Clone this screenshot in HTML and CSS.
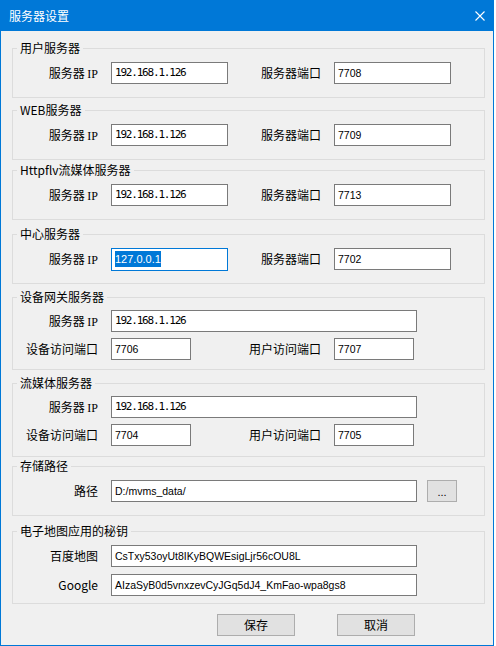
FILE: index.html
```html
<!DOCTYPE html>
<html lang="zh-CN">
<head>
<meta charset="utf-8">
<title>服务器设置</title>
<link rel="stylesheet" href="styles.css">
</head>
<body>
<div class="window">
  <div class="titlebar">
    <span class="title">服务器设置</span>
    <svg class="close" width="10" height="10" viewBox="0 0 10 10" aria-label="关闭">
      <path d="M0.5 0.5L9.5 9.5M9.5 0.5L0.5 9.5" stroke="#fff" stroke-width="1.1" fill="none"/>
    </svg>
  </div>

  <div class="content">
    <section class="group">
      <span class="legend">用户服务器</span>
      <div class="row">
        <span class="lbl">服务器 <span class="latin">IP</span></span>
        <span class="field w-md mono">192.168.1.126</span>
        <span class="lbl lbl-md">服务器端口</span>
        <span class="field w-md">7708</span>
      </div>
    </section>

    <section class="group gap-m">
      <span class="legend">WEB服务器</span>
      <div class="row">
        <span class="lbl">服务器 <span class="latin">IP</span></span>
        <span class="field w-md mono">192.168.1.126</span>
        <span class="lbl lbl-md">服务器端口</span>
        <span class="field w-md">7709</span>
      </div>
    </section>

    <section class="group gap-s">
      <span class="legend">Httpflv流媒体服务器</span>
      <div class="row">
        <span class="lbl">服务器 <span class="latin">IP</span></span>
        <span class="field w-md mono">192.168.1.126</span>
        <span class="lbl lbl-md">服务器端口</span>
        <span class="field w-md">7713</span>
      </div>
    </section>

    <section class="group gap-l">
      <span class="legend">中心服务器</span>
      <div class="row">
        <span class="lbl">服务器 <span class="latin">IP</span></span>
        <span class="field w-md focus"><span class="sel">127.0.0.1</span></span>
        <span class="lbl lbl-md">服务器端口</span>
        <span class="field w-md">7702</span>
      </div>
    </section>

    <section class="group two gap-ml">
      <span class="legend">设备网关服务器</span>
      <div class="row">
        <span class="lbl">服务器 <span class="latin">IP</span></span>
        <span class="field w-lg mono">192.168.1.126</span>
      </div>
      <div class="row">
        <span class="lbl">设备访问端口</span>
        <span class="field w-sm">7706</span>
        <span class="lbl lbl-lg">用户访问端口</span>
        <span class="field w-sm">7707</span>
      </div>
    </section>

    <section class="group two tall gap-ml">
      <span class="legend">流媒体服务器</span>
      <div class="row">
        <span class="lbl">服务器 <span class="latin">IP</span></span>
        <span class="field w-lg mono">192.168.1.126</span>
      </div>
      <div class="row">
        <span class="lbl">设备访问端口</span>
        <span class="field w-sm">7704</span>
        <span class="lbl lbl-lg">用户访问端口</span>
        <span class="field w-sm">7705</span>
      </div>
    </section>

    <section class="group gap-xs">
      <span class="legend">存储路径</span>
      <div class="row">
        <span class="lbl">路径</span>
        <span class="field w-lg">D:/mvms_data/</span>
        <span class="browse">...</span>
      </div>
    </section>

    <section class="group two keys gap-xl">
      <span class="legend">电子地图应用的秘钥</span>
      <div class="row">
        <span class="lbl">百度地图</span>
        <span class="field w-lg">CsTxy53oyUt8IKyBQWEsigLjr56cOU8L</span>
      </div>
      <div class="row">
        <span class="lbl">Google</span>
        <span class="field w-lg">AIzaSyB0d5vnxzevCyJGq5dJ4_KmFao-wpa8gs8</span>
      </div>
    </section>

    <div class="actions">
      <span class="btn">保存</span>
      <span class="btn">取消</span>
    </div>
  </div>
</div>
</body>
</html>
```

FILE: styles.css
```css
* {
  box-sizing: border-box;
}

html,
body {
  margin: 0;
}

body {
  background: #ffffff;
  color: #000000;
  font-family: "Noto Sans CJK SC", sans-serif;
  font-size: 12px;
}

/* dialog frame */
.window {
  width: 494px;
  height: 646px;
  border: 1px solid #0078d7;
  border-top: 0;
  background: #f0f0f0;
  display: flex;
  flex-direction: column;
}

.titlebar {
  height: 31px;
  flex: none;
  background: #0078d7;
  color: #ffffff;
  display: flex;
  align-items: center;
  justify-content: space-between;
  padding: 0 8px 0 8px;
}

.title {
  font-size: 12px;
  line-height: 14px;
}

.close {
  display: block;
}

.content {
  padding: 17px 8px 0 11px;
}

/* group boxes */
.group {
  position: relative;
  border: 1px solid #dcdcdc;
  padding: 13px 0 13px 0;
}

.group.two {
  padding: 12px 0 9px 0;
}

.group.two.tall {
  padding-bottom: 10px;
}

.group.two.keys {
  padding: 13px 0 7px 0;
}

.group.keys .row + .row {
  margin-top: 7px;
}

.gap-xs { margin-top: 9px; }
.gap-s  { margin-top: 10px; }
.gap-m  { margin-top: 12px; }
.gap-ml { margin-top: 13px; }
.gap-l  { margin-top: 14px; }
.gap-xl { margin-top: 15px; }

.legend {
  position: absolute;
  top: -9px;
  left: 4px;
  padding: 0 3px;
  background: #f0f0f0;
  line-height: 16px;
  white-space: nowrap;
}

/* form rows */
.row {
  display: flex;
  align-items: center;
  height: 22px;
}

.row + .row {
  margin-top: 6px;
}

.lbl {
  flex: none;
  width: 85px;
  margin-right: 13px;
  text-align: right;
  white-space: nowrap;
  line-height: 16px;
}

.lbl-md { width: 93px; }
.lbl-lg { width: 130px; }

.latin {
  font-family: "Liberation Serif", serif;
  font-size: 12px;
}

.field {
  flex: none;
  height: 22px;
  border: 1px solid #7a7a7a;
  background: #ffffff;
  padding: 0 3px 1px 3px;
  display: flex;
  align-items: center;
  font-family: "Liberation Sans", sans-serif;
  font-size: 10.5px;
  white-space: nowrap;
  overflow: hidden;
}

.w-sm { width: 80px; }
.w-md { width: 117px; }
.w-lg { width: 306px; }

.field.mono {
  font-family: "DejaVu Sans Mono", monospace;
  font-size: 11px;
  letter-spacing: -1.2px;
}

.field.focus {
  border-color: #0078d7;
  height: 23px;
  padding-bottom: 0;
}

.sel {
  background: #0078d7;
  color: #ffffff;
  line-height: 16px;
  font-size: 11px;
}

/* buttons */
.browse,
.btn {
  flex: none;
  height: 22px;
  border: 1px solid #adadad;
  background: #e1e1e1;
  display: flex;
  align-items: center;
  justify-content: center;
}

.browse {
  width: 30px;
  margin-left: 10px;
  font-family: "Liberation Sans", sans-serif;
  font-size: 11px;
  padding-top: 2px;
}

.actions {
  display: flex;
  gap: 42px;
  margin-top: 10px;
  padding-left: 205px;
}

.btn {
  width: 78px;
  font-size: 12px;
  line-height: 16px;
}
```
